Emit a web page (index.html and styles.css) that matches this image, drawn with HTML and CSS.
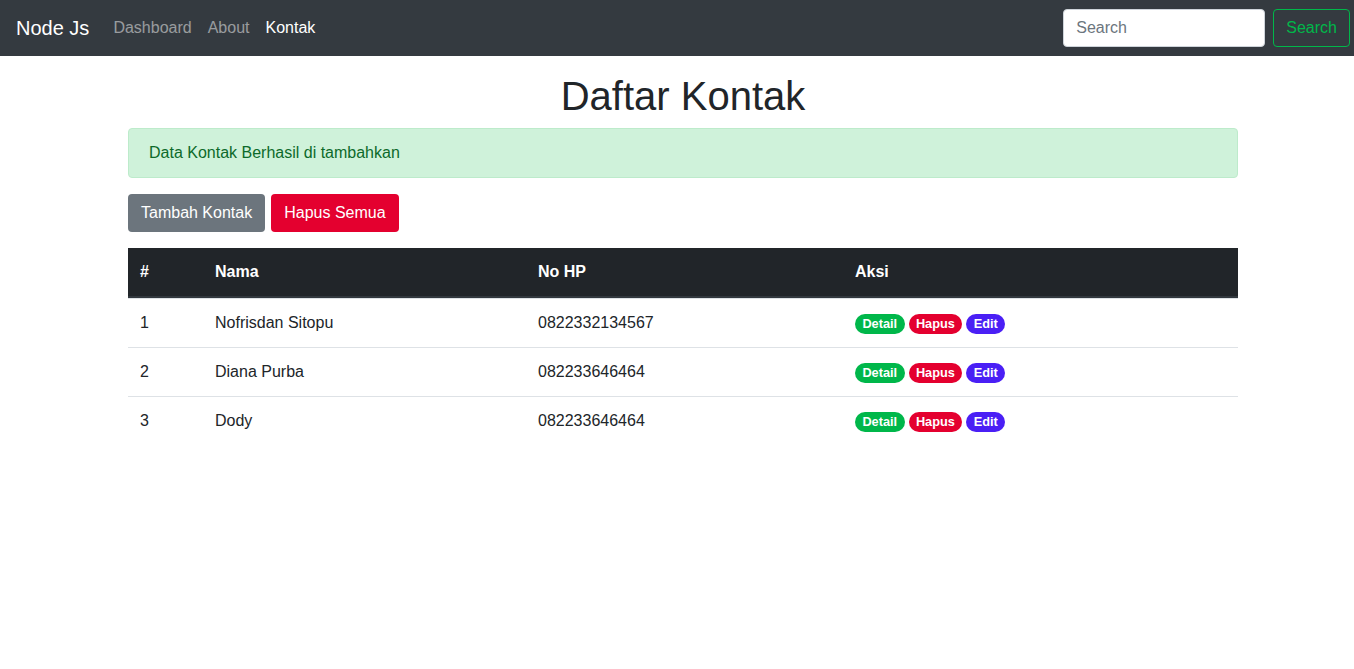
FILE: index.html
```html
<!DOCTYPE html>
<html lang="id">
<head>
<meta charset="utf-8">
<title>Daftar Kontak</title>
<link rel="stylesheet" href="styles.css">
</head>
<body>
<nav class="navbar">
  <div class="nav-left">
    <a class="brand" href="#">Node Js</a>
    <ul class="nav">
      <li><a class="nav-link" href="#">Dashboard</a></li>
      <li><a class="nav-link" href="#">About</a></li>
      <li><a class="nav-link active" href="#">Kontak</a></li>
    </ul>
  </div>
  <form class="search">
    <input class="search-input" type="search" placeholder="Search">
    <button class="search-btn" type="button">Search</button>
  </form>
</nav>
<main class="container">
  <h1 class="title">Daftar Kontak</h1>
  <div class="alert">Data Kontak Berhasil di tambahkan</div>
  <div class="actions">
    <a class="btn btn-secondary" href="#">Tambah Kontak</a>
    <a class="btn btn-danger" href="#">Hapus Semua</a>
  </div>
  <table class="table">
    <thead>
      <tr>
        <th class="c-no">#</th>
        <th class="c-nama">Nama</th>
        <th class="c-hp">No HP</th>
        <th class="c-aksi">Aksi</th>
      </tr>
    </thead>
    <tbody>
      <tr>
        <td>1</td><td>Nofrisdan Sitopu</td><td>0822332134567</td>
        <td><span class="badges"><a class="badge b-green" href="#">Detail</a><a class="badge b-red" href="#">Hapus</a><a class="badge b-blue" href="#">Edit</a></span></td>
      </tr>
      <tr>
        <td>2</td><td>Diana Purba</td><td>082233646464</td>
        <td><span class="badges"><a class="badge b-green" href="#">Detail</a><a class="badge b-red" href="#">Hapus</a><a class="badge b-blue" href="#">Edit</a></span></td>
      </tr>
      <tr>
        <td>3</td><td>Dody</td><td>082233646464</td>
        <td><span class="badges"><a class="badge b-green" href="#">Detail</a><a class="badge b-red" href="#">Hapus</a><a class="badge b-blue" href="#">Edit</a></span></td>
      </tr>
    </tbody>
  </table>
</main>
</body>
</html>
```

FILE: styles.css
```css
* { box-sizing: border-box; }
html, body { margin: 0; padding: 0; }
body {
  font-family: "Liberation Sans", Arial, sans-serif;
  font-size: 16px;
  line-height: 1.5;
  color: #212529;
  background: #fff;
}
a { text-decoration: none; }

.navbar {
  height: 56px;
  background: #343a40;
  display: flex;
  align-items: center;
  justify-content: space-between;
  padding: 8px 4px 8px 16px;
}
.nav-left { display: flex; align-items: center; }
.brand {
  font-size: 20px;
  line-height: 30px;
  color: #fff;
  margin-right: 16px;
}
.nav { list-style: none; margin: 0; padding: 0; display: flex; }
.nav-link {
  display: block;
  padding: 8px;
  color: rgba(255,255,255,.5);
}
.nav-link.active { color: #fff; }

.search { display: flex; align-items: center; gap: 8px; }
.search-input {
  width: 202px;
  height: 38px;
  padding: 6px 12px;
  font: inherit;
  color: #495057;
  background: #fff;
  border: 1px solid #ced4da;
  border-radius: 4px;
}
.search-input::placeholder { color: #6c757d; }
.search-btn {
  height: 38px;
  padding: 6px 12px;
  font: inherit;
  color: #00b74a;
  background: transparent;
  border: 1px solid #00b74a;
  border-radius: 4px;
}

.container {
  width: 1110px;
  margin: 0 0 0 128px;
}
.title {
  margin: 16px 0 8px;
  font-size: 40px;
  font-weight: 500;
  line-height: 48px;
  text-align: center;
}
.alert {
  padding: 12px 20px;
  margin-bottom: 16px;
  background: #cff2da;
  border: 1px solid #bdebcb;
  border-radius: 4px;
  color: #0d6a2a;
}
.actions { display: flex; gap: 6px; margin-bottom: 16px; }
.btn {
  display: inline-block;
  padding: 6px 12px;
  line-height: 24px;
  border: 1px solid transparent;
  border-radius: 4px;
  color: #fff;
}
.btn-secondary { background: #6c757d; }
.btn-danger { background: #e4002f; }

.table {
  width: 100%;
  border-collapse: separate;
  border-spacing: 0;
}
.table th, .table td {
  padding: 12px;
  line-height: 24px;
  height: 48px;
  text-align: left;
  vertical-align: top;
}
.table thead th {
  background: #212529;
  color: #fff;
  font-weight: 700;
  border-bottom: 2px solid #32383e;
}
.table tbody td { border-top: 1px solid #dee2e6; height: 49px; }
.c-no { width: 75px; }
.c-nama { width: 323px; }
.c-hp { width: 317px; }

.badges {
  display: inline-flex;
  gap: 4px;
  height: 20px;
  vertical-align: middle;
}
.badge {
  display: block;
  font-size: 12.75px;
  font-weight: 700;
  line-height: 13px;
  padding: 3px 7.4px 4px;
  border-radius: 160px;
  color: #fff;
}
.b-green { background: #00b74a; }
.b-red { background: #e4002f; }
.b-blue { background: #4a1ff5; }
```
